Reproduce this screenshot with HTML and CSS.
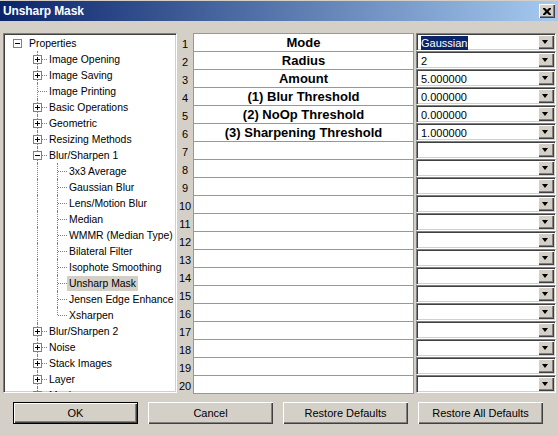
FILE: index.html
```html
<!DOCTYPE html>
<html>
<head>
<meta charset="utf-8">
<title>Unsharp Mask</title>
<link rel="stylesheet" href="styles.css">
</head>
<body>
<div class="window">
  <div class="titlebar">
    <span class="title">Unsharp Mask</span>
    <span class="close"><svg width="8" height="7" viewBox="0 0 8 7"><path d="M0 0h2l2 2 2-2h2v1L5.5 3.5 8 6v1H6L4 5 2 7H0V6l2.5-2.5L0 1z" fill="#000"/></svg></span>
  </div>
  <div class="main">
    <div class="tree">
      <div class="node"><span class="cell"><span class="box minus"></span></span><span class="label">Properties</span></div>
      <div class="node"><span class="cell"></span><span class="cell tee"><span class="box plus"></span></span><span class="label">Image Opening</span></div>
      <div class="node"><span class="cell"></span><span class="cell tee"><span class="box plus"></span></span><span class="label">Image Saving</span></div>
      <div class="node"><span class="cell"></span><span class="cell tee"></span><span class="label">Image Printing</span></div>
      <div class="node"><span class="cell"></span><span class="cell tee"><span class="box plus"></span></span><span class="label">Basic Operations</span></div>
      <div class="node"><span class="cell"></span><span class="cell tee"><span class="box plus"></span></span><span class="label">Geometric</span></div>
      <div class="node"><span class="cell"></span><span class="cell tee"><span class="box plus"></span></span><span class="label">Resizing Methods</span></div>
      <div class="node"><span class="cell"></span><span class="cell tee"><span class="box minus"></span></span><span class="label">Blur/Sharpen 1</span></div>
      <div class="node"><span class="cell"></span><span class="cell line"></span><span class="cell tee"></span><span class="label">3x3 Average</span></div>
      <div class="node"><span class="cell"></span><span class="cell line"></span><span class="cell tee"></span><span class="label">Gaussian Blur</span></div>
      <div class="node"><span class="cell"></span><span class="cell line"></span><span class="cell tee"></span><span class="label">Lens/Motion Blur</span></div>
      <div class="node"><span class="cell"></span><span class="cell line"></span><span class="cell tee"></span><span class="label">Median</span></div>
      <div class="node"><span class="cell"></span><span class="cell line"></span><span class="cell tee"></span><span class="label">WMMR (Median Type)</span></div>
      <div class="node"><span class="cell"></span><span class="cell line"></span><span class="cell tee"></span><span class="label">Bilateral Filter</span></div>
      <div class="node"><span class="cell"></span><span class="cell line"></span><span class="cell tee"></span><span class="label">Isophote Smoothing</span></div>
      <div class="node"><span class="cell"></span><span class="cell line"></span><span class="cell tee"></span><span class="label selected">Unsharp Mask</span></div>
      <div class="node"><span class="cell"></span><span class="cell line"></span><span class="cell tee"></span><span class="label">Jensen Edge Enhance</span></div>
      <div class="node"><span class="cell"></span><span class="cell line"></span><span class="cell elbow"></span><span class="label">Xsharpen</span></div>
      <div class="node"><span class="cell"></span><span class="cell tee"><span class="box plus"></span></span><span class="label">Blur/Sharpen 2</span></div>
      <div class="node"><span class="cell"></span><span class="cell tee"><span class="box plus"></span></span><span class="label">Noise</span></div>
      <div class="node"><span class="cell"></span><span class="cell tee"><span class="box plus"></span></span><span class="label">Stack Images</span></div>
      <div class="node"><span class="cell"></span><span class="cell tee"><span class="box plus"></span></span><span class="label">Layer</span></div>
      <div class="node"><span class="cell"></span><span class="cell tee"><span class="box plus"></span></span><span class="label">Mask</span></div>
    </div>
    <div class="grid">
      <div class="num">1</div><div class="name">Mode</div><div class="combo"><span class="value"><span class="hl">Gaussian</span></span><span class="drop"></span></div>
      <div class="num">2</div><div class="name">Radius</div><div class="combo"><span class="value">2</span><span class="drop"></span></div>
      <div class="num">3</div><div class="name">Amount</div><div class="combo"><span class="value">5.000000</span><span class="drop"></span></div>
      <div class="num">4</div><div class="name">(1) Blur Threshold</div><div class="combo"><span class="value">0.000000</span><span class="drop"></span></div>
      <div class="num">5</div><div class="name">(2) NoOp Threshold</div><div class="combo"><span class="value">0.000000</span><span class="drop"></span></div>
      <div class="num">6</div><div class="name">(3) Sharpening Threshold</div><div class="combo"><span class="value">1.000000</span><span class="drop"></span></div>
      <div class="num">7</div><div class="name"></div><div class="combo"><span class="value"></span><span class="drop"></span></div>
      <div class="num">8</div><div class="name"></div><div class="combo"><span class="value"></span><span class="drop"></span></div>
      <div class="num">9</div><div class="name"></div><div class="combo"><span class="value"></span><span class="drop"></span></div>
      <div class="num">10</div><div class="name"></div><div class="combo"><span class="value"></span><span class="drop"></span></div>
      <div class="num">11</div><div class="name"></div><div class="combo"><span class="value"></span><span class="drop"></span></div>
      <div class="num">12</div><div class="name"></div><div class="combo"><span class="value"></span><span class="drop"></span></div>
      <div class="num">13</div><div class="name"></div><div class="combo"><span class="value"></span><span class="drop"></span></div>
      <div class="num">14</div><div class="name"></div><div class="combo"><span class="value"></span><span class="drop"></span></div>
      <div class="num">15</div><div class="name"></div><div class="combo"><span class="value"></span><span class="drop"></span></div>
      <div class="num">16</div><div class="name"></div><div class="combo"><span class="value"></span><span class="drop"></span></div>
      <div class="num">17</div><div class="name"></div><div class="combo"><span class="value"></span><span class="drop"></span></div>
      <div class="num">18</div><div class="name"></div><div class="combo"><span class="value"></span><span class="drop"></span></div>
      <div class="num">19</div><div class="name"></div><div class="combo"><span class="value"></span><span class="drop"></span></div>
      <div class="num">20</div><div class="name last"></div><div class="combo"><span class="value"></span><span class="drop"></span></div>
    </div>
  </div>
  <div class="buttons">
    <span class="btn default">OK</span>
    <span class="btn">Cancel</span>
    <span class="btn">Restore Defaults</span>
    <span class="btn">Restore All Defaults</span>
  </div>
</div>
</body>
</html>
```
FILE: styles.css
```css
html, body {
  margin: 0;
  padding: 0;
}
body {
  width: 558px;
  height: 436px;
  background: #d4d0c8;
  font-family: "Liberation Sans", Arial, sans-serif;
  color: #000;
  overflow: hidden;
}
.window {
  display: flex;
  flex-direction: column;
  padding-top: 1px;
}
.titlebar {
  height: 20px;
  background: linear-gradient(to right, #0a246a, #a6caf0);
  display: flex;
  align-items: center;
  justify-content: space-between;
  padding: 0 3px 0 3px;
}
.title {
  color: #fff;
  font-weight: bold;
  font-size: 12px;
  letter-spacing: -0.1px;
}
.close {
  width: 16px;
  height: 14px;
  box-sizing: border-box;
  background: #d4d0c8;
  box-shadow: inset 1px 1px #fff, inset -1px -1px #404040, inset -2px -2px #808080;
  display: flex;
  align-items: center;
  justify-content: center;
  padding-right: 1px;
}
.close svg { display: block; }

.main {
  display: flex;
  margin-top: 12px;
  padding-left: 3px;
  height: 361px;
}
.tree {
  width: 174px;
  height: 360px;
  box-sizing: border-box;
  background: #fff;
  border: 1px solid;
  border-color: #808080 #fff #fff #808080;
  box-shadow: inset 1px 1px #404040, inset -1px -1px #d4d0c8;
  padding: 1px 0 0 3px;
  overflow: hidden;
  font-size: 10.4px;
}
.node {
  display: flex;
  height: 16px;
  align-items: center;
}
.cell {
  position: relative;
  width: 20px;
  height: 16px;
  flex: none;
}
.line::before,
.tee::before,
.elbow::before {
  content: "";
  position: absolute;
  left: 10px;
  top: 0;
  height: 16px;
  border-left: 1px dotted #808080;
}
.elbow::before { height: 8px; }
.tee::after,
.elbow::after {
  content: "";
  position: absolute;
  left: 11px;
  top: 8px;
  width: 9px;
  border-top: 1px dotted #808080;
}
.box {
  position: absolute;
  left: 6px;
  top: 4px;
  width: 9px;
  height: 9px;
  box-sizing: border-box;
  border: 1px solid #808080;
  background: #fff;
  z-index: 1;
}
.box::before {
  content: "";
  position: absolute;
  left: 1px;
  top: 3px;
  width: 5px;
  height: 1px;
  background: #000;
}
.plus::after {
  content: "";
  position: absolute;
  left: 3px;
  top: 1px;
  width: 1px;
  height: 5px;
  background: #000;
}
.label {
  white-space: nowrap;
  line-height: 15px;
  padding: 0 2px;
}
.selected { background: #d4d0c8; }

.grid {
  display: grid;
  grid-template-columns: 16px 221px 142px;
  grid-auto-rows: 18px;
  align-content: start;
}
.num {
  font-size: 11px;
  text-align: center;
  line-height: 18px;
  padding-top: 2px;
  box-sizing: border-box;
}
.name {
  background: #fff;
  border: 1px solid #7f9db9;
  border-bottom: none;
  box-sizing: border-box;
  height: 18px;
  font-weight: bold;
  font-size: 13px;
  line-height: 17px;
  text-align: center;
  white-space: nowrap;
}
.name.last {
  border-bottom: 1px solid #7f9db9;
  height: 19px;
}
.combo {
  margin-left: 2px;
  height: 18px;
  box-sizing: border-box;
  background: #fff;
  border: 1px solid;
  border-color: #808080 #fff #fff #808080;
  box-shadow: inset 1px 1px #404040, inset -1px -1px #d4d0c8;
  padding: 2px 1px 1px 1px;
  display: flex;
}
.value {
  flex: 1;
  font-size: 11px;
  line-height: 14px;
  padding-left: 3px;
  white-space: nowrap;
}
.hl {
  background: #0a246a;
  color: #fff;
  display: inline-block;
  padding-right: 1px;
}
.drop {
  width: 16px;
  height: 14px;
  box-sizing: border-box;
  background: #d4d0c8;
  box-shadow: inset 1px 1px #fff, inset -1px -1px #404040, inset -2px -2px #808080;
  position: relative;
  margin-top: -1px;
}
.drop::after {
  content: "";
  position: absolute;
  left: 4px;
  top: 5px;
  border-left: 3.5px solid transparent;
  border-right: 3.5px solid transparent;
  border-top: 4px solid #000;
}

.buttons {
  display: flex;
  gap: 10px;
  padding-left: 13px;
  margin-top: 8px;
}
.btn {
  width: 125px;
  height: 22px;
  box-sizing: border-box;
  background: #d4d0c8;
  box-shadow: inset 1px 1px #fff, inset -1px -1px #404040, inset -2px -2px #808080;
  font-size: 11px;
  display: flex;
  align-items: center;
  justify-content: center;
}
.btn.default {
  border: 1px solid #000;
}
```
